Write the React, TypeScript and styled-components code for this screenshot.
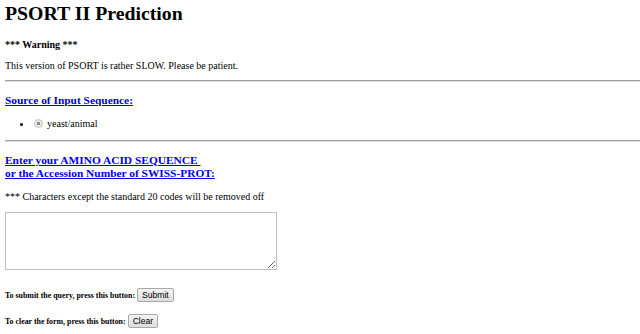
import styled, { createGlobalStyle } from "styled-components";

const GlobalStyle = createGlobalStyle`
  html, body {
    margin: 0;
    padding: 0;
    background: #ffffff;
  }
  body {
    padding-left: 5px;
    font-family: "Liberation Serif", "Times New Roman", serif;
    font-size: 10px;
    color: #000000;
  }
`;

const Page = styled.div`
  display: flex;
  flex-direction: column;
`;

const Title = styled.h1`
  margin: 1px 0 0;
  font-size: 19.8px;
  line-height: 24px;
  font-weight: bold;
`;

const Para = styled.p<{ $top: number; $bold?: boolean }>`
  margin: ${(p) => p.$top}px 0 0;
  line-height: 13px;
  font-weight: ${(p) => (p.$bold ? "bold" : "normal")};
`;

const Rule = styled.hr<{ $top: number }>`
  margin: ${(p) => p.$top}px 0 0;
  height: 0;
  border: none;
  border-top: 1px solid #a0a0a0;
  border-bottom: 1px solid #e0e0e0;
`;

const SectionLink = styled.a<{ $top: number }>`
  display: block;
  margin-top: ${(p) => p.$top}px;
  font-size: 11.4px;
  line-height: 13px;
  font-weight: bold;
  color: #0000ee;
  text-decoration: underline;
  width: fit-content;
`;

const List = styled.ul`
  margin: 10px 0 0;
  padding-left: 28px;
  line-height: 13px;
  list-style: disc;
`;

const Option = styled.li`
  display: list-item;
`;

const OptionRow = styled.span`
  display: inline-flex;
  align-items: center;
  gap: 4px;
`;

const Radio = styled.span`
  display: inline-block;
  width: 7px;
  height: 7px;
  margin-left: 1px;
  border-radius: 50%;
  border: 1px solid #c4c4c4;
  background: radial-gradient(circle, #8a8a8a 0 1.6px, #e8e8e8 2px);
`;

const SeqBox = styled.textarea`
  display: block;
  margin-top: 9px;
  width: 272px;
  height: 58px;
  box-sizing: border-box;
  border: 1px solid #c0c0c0;
  padding: 2px;
  font-family: "Liberation Mono", monospace;
  font-size: 10px;
  resize: both;
`;

const ActionRow = styled.div<{ $top: number }>`
  display: flex;
  align-items: center;
  gap: 2px;
  margin-top: ${(p) => p.$top}px;
`;

const ActionLabel = styled.span`
  font-size: 7.9px;
  font-weight: bold;
`;

const Btn = styled.button`
  font-family: "Liberation Sans", Arial, sans-serif;
  font-size: 8.6px;
  line-height: 10px;
  padding: 1px 4px;
  height: 14px;
  color: #000;
  background: linear-gradient(#f4f4f4, #dedede);
  border: 1px solid #a9a9a9;
  border-radius: 2px;
`;

export default function App() {
  return (
    <>
      <GlobalStyle />
      <Page>
        <Title>PSORT II Prediction</Title>
        <Para $top={13} $bold>*** Warning ***</Para>
        <Para $top={8}>This version of PSORT is rather SLOW. Please be patient.</Para>
        <Rule $top={8} />
        <SectionLink $top={12} href="#source">Source of Input Sequence:</SectionLink>
        <List>
          <Option>
            <OptionRow>
              <Radio />
              yeast/animal
            </OptionRow>
          </Option>
        </List>
        <Rule $top={9} />
        <SectionLink $top={12} href="#sequence">
          Enter your AMINO ACID SEQUENCE&nbsp;
          <br />
          or the Accession Number of SWISS-PROT:
        </SectionLink>
        <Para $top={10}>*** Characters except the standard 20 codes will be removed off</Para>
        <SeqBox />
        <ActionRow $top={18}>
          <ActionLabel>To submit the query, press this button:</ActionLabel>
          <Btn>Submit</Btn>
        </ActionRow>
        <ActionRow $top={12}>
          <ActionLabel>To clear the form, press this button:</ActionLabel>
          <Btn>Clear</Btn>
        </ActionRow>
      </Page>
    </>
  );
}
